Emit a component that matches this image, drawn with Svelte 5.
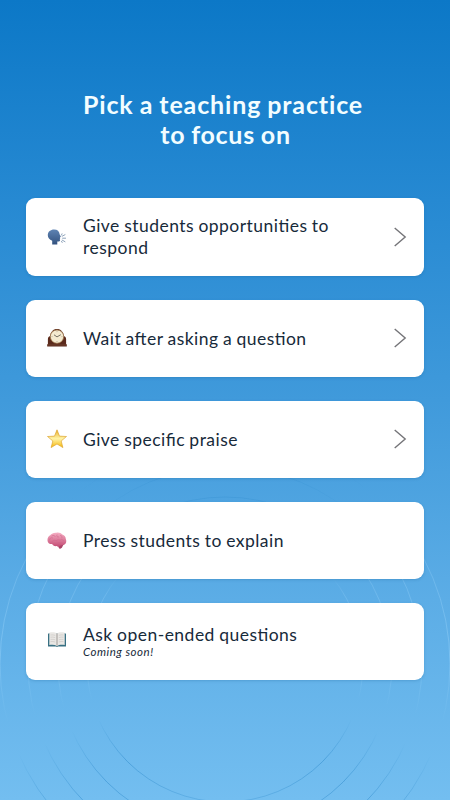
<script>
  const practices = [
    { icon: 'speech', label: 'Give students opportunities to respond', open: true },
    { icon: 'clock', label: 'Wait after asking a question', open: true },
    { icon: 'star', label: 'Give specific praise', open: true },
    { icon: 'brain', label: 'Press students to explain' },
    { icon: 'book', label: 'Ask open-ended questions', note: 'Coming soon!' }
  ];
  const rings = [138, 167, 197, 225];
</script>

<main>
  <svg class="rings" viewBox="0 0 450 800" aria-hidden="true">
    <defs>
      <linearGradient id="ring" x1="0" y1="0" x2="0" y2="1">
        <stop offset="0" stop-color="#2483c6" stop-opacity=".22" />
        <stop offset=".12" stop-color="#2483c6" stop-opacity="0" />
        <stop offset=".25" stop-color="#a8dcff" stop-opacity=".22" />
        <stop offset=".48" stop-color="#a8dcff" stop-opacity=".34" />
        <stop offset=".63" stop-color="#a8dcff" stop-opacity="0" />
        <stop offset=".70" stop-color="#2483c6" stop-opacity="0" />
        <stop offset=".85" stop-color="#2483c6" stop-opacity=".45" />
        <stop offset="1" stop-color="#2483c6" stop-opacity=".25" />
      </linearGradient>
    </defs>
    {#each rings as r}
      <circle cx="225" cy="664" {r} fill="none" stroke="url(#ring)" />
    {/each}
  </svg>

  <h1>Pick a teaching practice<br /><span>to focus on</span></h1>

  <ul>
    {#each practices as p}
      <li class:noted={p.note}>
        <svg class="icon" viewBox="0 0 20 20" aria-hidden="true">
          {#if p.icon === 'speech'}
            <defs><linearGradient id="head" x2="0" y2="1"><stop stop-color="#5e83b3" /><stop offset="1" stop-color="#33527f" /></linearGradient></defs>
            <path fill="url(#head)" d="M5.2 17.500v-3.700C2.500 12.700.8 10.700.8 8.200.8 4.800 3.600 2.600 7 2.600c3.500 0 5.500 2 5.700 4.900l1.200 2.200-1 .7.3 1.100-.5.6.4.8c-.2 1.600-1.300 1.800-2.800 1.500v3.100z" />
            <path fill="none" stroke="#8298b2" stroke-width=".9" stroke-linecap="round" d="M15.200 9.200l2.800-1.500M15.600 11.200h3M15.200 13.100l2.800 1.600M14.500 8l.5-1.200M14.500 14.300l.7 1.200" />
          {:else if p.icon === 'clock'}
            <path fill="#5b2a1c" d="M.2 18.600v-2l.7-.7V11c0-1.600 1-2.500 2.200-3C3.600 3.700 6.200 1 10 1s6.400 2.700 6.900 7c1.200.5 2.200 1.400 2.200 3v4.900l.7.700v2z" />
            <circle cx="10" cy="8.600" r="6.700" fill="#f4ead0" stroke="#9a744a" stroke-width=".8" />
            <path d="M10 3.100v1M10 13v1M4.500 8.600h1M14.500 8.600h1" stroke="#9a8b73" stroke-width=".6" />
            <path d="M7 6.800L10 8.900l3.800-2.200" fill="none" stroke="#555049" stroke-width=".8" />
            <path d="M.7 17h18.600" stroke="#81503d" stroke-width=".6" />
          {:else if p.icon === 'star'}
            <defs><linearGradient id="gold" x2="0" y2="1"><stop stop-color="#e9ae28" /><stop offset=".5" stop-color="#fff3a6" /><stop offset="1" stop-color="#f5b70d" /></linearGradient></defs>
            <path fill="url(#gold)" stroke="#d99c22" stroke-width=".6" stroke-linejoin="round" d="M10 .8l2.500 6.300 7 .4-5.300 4.500 1.700 6.600L10 15l-5.900 3.600L5.800 12 .5 7.500l7-.4z" />
          {:else if p.icon === 'brain'}
            <defs><linearGradient id="pink" x2="0" y2="1"><stop stop-color="#f5afc4" /><stop offset="1" stop-color="#c44d75" /></linearGradient></defs>
            <path fill="#a94267" d="M11 12l5.800 1-1.900 3.700-2 1.400-1.300-1.700z" />
            <path fill="url(#pink)" d="M.5 9.500c-.2-2.500 1-4.400 2.700-5.200C4.500 2.300 7.200 1.400 9.300 1.700c2.300-.6 4.800.3 6 1.700 2.200.6 3.500 2.600 3.500 4.500.9 2 .4 4.100-.7 5.200-1.200 1-2.800 1.300-4.500 1.300-1 1.200-2.700 1.700-4 .7-2.200.4-3.800-.7-4.500-2C2.700 13.300.6 12 .5 9.500z" />
            <path fill="none" stroke="#d0668b" stroke-width=".6" stroke-linecap="round" d="M2.500 9c.2-2 1.500-2.700 3-2.100M5 4.900c1.500-1 2.700-.5 3.200.6M10 3.900c-.8 1.500.2 2.500 1.700 2.100M13.500 4.500c1.500.2 2 1.300 1.300 2.400M4.800 11.300c.9-2.500 3-2.200 4.300-1.500 1.500-.9 2.500-1.400 3.900-.5 1.300-.9 2.500-.8 3.600.3M9.200 13c1.500-2.200 4-1.500 6-.7" />
          {:else}
            <path fill="#387083" d="M1 5l.8-.8h16.400l.8.800v12.400h-8l-1 .5-1-.5H1z" />
            <path fill="#e9e7e4" d="M2.300 3.800C5 3 8.200 3.200 10 4.600c1.800-1.400 5-1.600 7.700-.8v12.300c-2.700-.7-5.700-.4-7.700.8-2.200-1.200-5-1.500-7.700-.8z" />
            <path fill="#bbb7b3" d="M9.200 4.300L10 5l.8-.7v12L10 17l-.8-.7z" />
            <path fill="none" stroke="#c8c4c1" stroke-width=".6" d="M3.500 6c1.700-.3 3.300-.1 4.700.4M3.500 8.200c1.700-.3 3.300-.1 4.700.4M3.500 10.400c1.700-.3 3.300-.1 4.700.4M3.500 12.600c1.700-.3 3.300-.1 4.700.4M11.800 6.400c1.500-.5 3-.7 4.700-.4M11.800 8.600c1.500-.5 3-.7 4.700-.4M11.800 10.800c1.500-.5 3-.7 4.700-.4M11.800 13c1.500-.5 3-.7 4.700-.4" />
          {/if}
        </svg>
        <div class="copy">
          <span class="label">{p.label}</span>
          {#if p.note}<em>{p.note}</em>{/if}
        </div>
        {#if p.open}
          <svg class="chevron" viewBox="0 0 14 22" aria-hidden="true"><path d="M1.700 2L12.200 11 1.700 20" /></svg>
        {/if}
      </li>
    {/each}
  </ul>
</main>

<style>
  main {
    position: relative;
    box-sizing: border-box;
    height: 800px;
    padding: 89px 26px 0;
    overflow: hidden;
    background: linear-gradient(#0c78c7, #2689d2 25%, #409adb 50%, #5cade6 75%, #73bef0);
    color: #172a3a;
    font-family: Lato, Carlito, sans-serif;
  }
  .rings { position: absolute; inset: 0; width: 450px; height: 800px; }
  h1 {
    position: relative;
    margin: 0 4px 0 0;
    color: #f2fdff;
    font-size: 25px;
    font-weight: 700;
    line-height: 30px;
    letter-spacing: 0.85px;
    word-spacing: -0.8px;
    text-align: center;
    white-space: nowrap;
  }
  h1 span { padding-left: 5px; letter-spacing: 0.7px; }
  ul {
    position: relative;
    display: flex;
    flex-direction: column;
    gap: 24px;
    margin: 49.4px 0 0;
    padding: 0;
    list-style: none;
  }
  li {
    display: flex;
    align-items: center;
    box-sizing: border-box;
    height: 77.2px;
    padding: 0 17px 0 21px;
    border-radius: 9px;
    background: #fff;
    box-shadow: 0 1px 3px rgb(15 80 130 / 22%);
  }
  .icon { flex: none; width: 20px; height: 20px; margin-right: 16px; }
  .noted .icon { margin-bottom: 5px; }
  .copy { display: flex; flex: 1; flex-direction: column; padding-top: 1px; }
  .noted .copy { padding: 0 0 2px; }
  .label {
    max-width: 270px;
    font-size: 17.5px;
    line-height: 22px;
    letter-spacing: 0.47px;
    word-spacing: -0.6px;
    font-feature-settings: "liga";
  }
  em { font-size: 11.5px; line-height: 12px; letter-spacing: 0.5px; }
  .chevron { flex: none; width: 14px; height: 22px; }
  .chevron path { fill: none; stroke: #747478; stroke-width: 1.4; }
</style>
